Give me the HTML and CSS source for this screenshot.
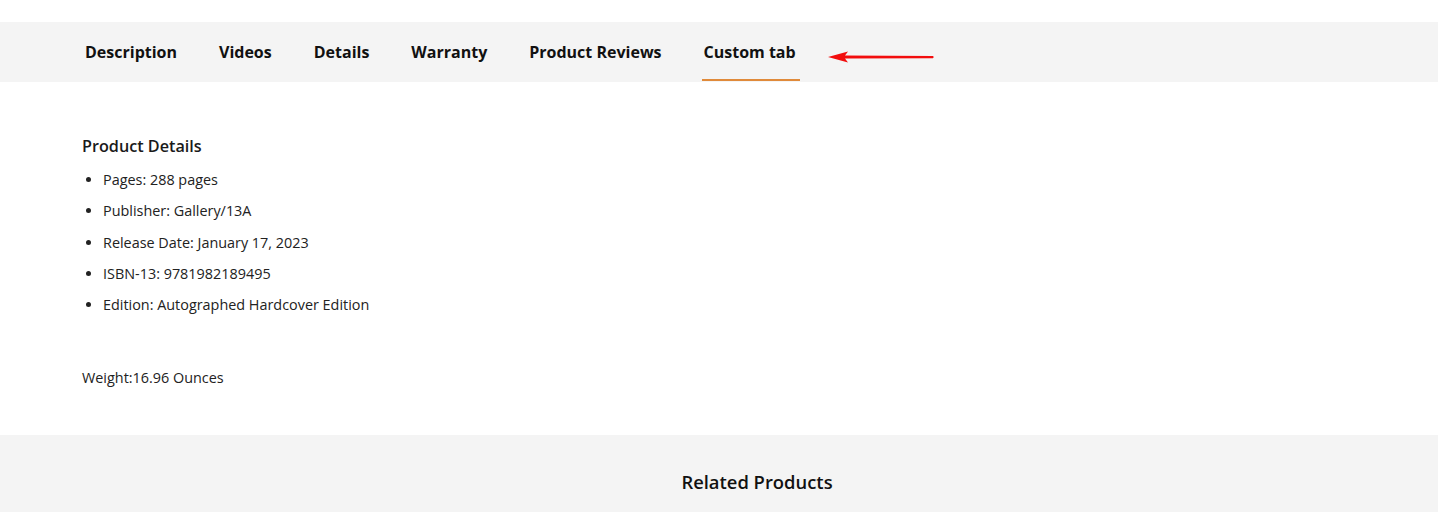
FILE: index.html
```html
<!DOCTYPE html>
<html>
<head>
<meta charset="utf-8">
<link rel="stylesheet" href="styles.css">
</head>
<body>
<div class="top-space"></div>
<nav class="tabs">
  <a class="tab">Description</a>
  <a class="tab">Videos</a>
  <a class="tab">Details</a>
  <a class="tab">Warranty</a>
  <a class="tab">Product Reviews</a>
  <a class="tab active">Custom tab</a>
  <svg class="arrow" width="108" height="14" viewBox="0 0 108 14">
    <path d="M1 7 L21 1.5 L18 5.6 L106 6 Q107.5 7 106 8.2 L18 8.6 L21 12.5 Z" fill="#f20d0d"/>
  </svg>
</nav>
<section class="content">
  <h3 class="heading">Product Details</h3>
  <ul class="list">
    <li>Pages: 288 pages</li>
    <li>Publisher: Gallery/13A</li>
    <li>Release Date: January 17, 2023</li>
    <li>ISBN-13: 9781982189495</li>
    <li>Edition: Autographed Hardcover Edition</li>
  </ul>
  <p class="weight">Weight:16.96 Ounces</p>
</section>
<section class="related">
  <h2 class="related-title">Related Products</h2>
</section>
</body>
</html>
```
FILE: styles.css
```css
html, body {
  margin: 0;
  padding: 0;
  background: #fff;
  font-family: "Open Sans", "Noto Sans", sans-serif;
  color: #1a1a1a;
}
.top-space {
  height: 22px;
}
.tabs {
  display: flex;
  align-items: center;
  height: 60px;
  background: #f4f4f4;
  padding-left: 82px;
  gap: 36px;
}
.tab {
  position: relative;
  padding: 0 3px;
  height: 60px;
  line-height: 60px;
  font-size: 16px;
  font-weight: 700;
  color: #111;
  white-space: nowrap;
}
.tab.active::after {
  content: "";
  position: absolute;
  left: 1px;
  right: -1px;
  bottom: 1px;
  height: 2px;
  background: #e08a3a;
}
.arrow {
  display: block;
  margin-left: -8px;
  margin-top: 9px;
}
.content {
  padding: 53px 82px 0;
  height: 353px;
  box-sizing: border-box;
}
.heading {
  margin: 0 0 13px;
  font-size: 16.2px;
  font-weight: 600;
  color: #1a1a1a;
  line-height: 22px;
}
.list {
  margin: 0;
  padding-left: 21px;
  font-size: 14.4px;
  color: #222;
}
.list li {
  line-height: 19px;
  margin-bottom: 12.3px;
}
.weight {
  margin: 54px 0 0;
  font-size: 14.4px;
  line-height: 19px;
  color: #222;
}
.related {
  background: #f4f4f4;
  height: 77px;
  padding-top: 35px;
  box-sizing: border-box;
}
.related-title {
  margin: 0;
  text-align: center;
  font-size: 18.4px;
  font-weight: 600;
  color: #111;
  line-height: 24px;
  padding-left: 76px;
}
```
